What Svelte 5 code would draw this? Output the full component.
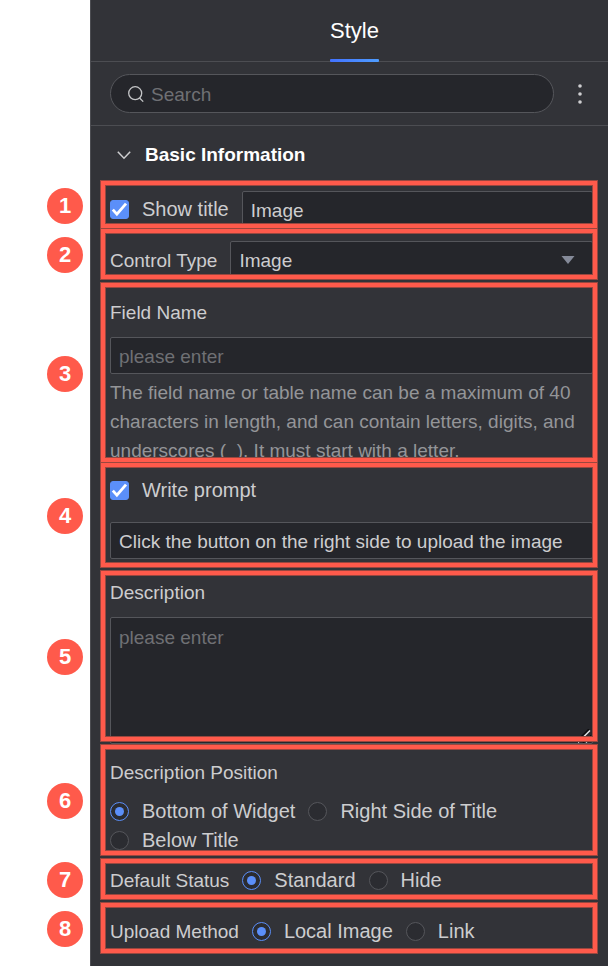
<script lang="ts">
	const positions = ['Bottom of Widget', 'Right Side of Title', 'Below Title'];
	const statuses = ['Standard', 'Hide'];
	const uploadMethods = ['Local Image', 'Link'];
	const controlTypes = ['Image', 'Text', 'Number'];

	let expanded = $state(true);
	let search = $state('');
	let showTitle = $state(true);
	let title = $state('Image');
	let controlType = $state('Image');
	let fieldName = $state('');
	let writePrompt = $state(true);
	let prompt = $state('Click the button on the right side to upload the image');
	let description = $state('');
	let position = $state('Bottom of Widget');
	let status = $state('Standard');
	let uploadMethod = $state('Local Image');
</script>

{#snippet badge(n: number)}
	<span class="badge">{n}</span>
{/snippet}

{#snippet tick()}
	<svg class="tick" viewBox="0 0 19 19" aria-hidden="true">
		<path d="M2.8 9.6 L6.9 14.2 L16 3.6" />
	</svg>
{/snippet}

<main class="panel">
	<header class="tabs">
		<button type="button" class="tab">Style</button>
	</header>

	<div class="toolbar">
		<label class="search">
			<svg class="search-icon" viewBox="0 0 16 16" aria-hidden="true">
				<circle cx="7.2" cy="7.2" r="6.5" />
				<path d="M11.6 12 L15.2 15.6" />
			</svg>
			<input type="text" placeholder="Search" aria-label="Search" bind:value={search} />
		</label>
		<button type="button" class="more" aria-label="More">
			<svg viewBox="0 0 20 20" aria-hidden="true">
				<circle cx="10" cy="2" r="1.8" />
				<circle cx="10" cy="10" r="1.8" />
				<circle cx="10" cy="18" r="1.8" />
			</svg>
		</button>
	</div>

	<button
		type="button"
		class="group-header"
		aria-expanded={expanded}
		onclick={() => (expanded = !expanded)}
	>
		<svg class="chevron" class:closed={!expanded} viewBox="0 0 14 14" aria-hidden="true">
			<path d="M0.8 3.8 L7 10.2 L13.2 3.8" />
		</svg>
		Basic Information
	</button>

	{#if expanded}
		<div class="settings">
			<section class="setting show-title joined">
				{@render badge(1)}
				<div class="row">
					<label class="option">
						<span class="check">
							<input type="checkbox" bind:checked={showTitle} />
							{@render tick()}
						</span>
						Show title
					</label>
					<input class="field" type="text" aria-label="Title" bind:value={title} />
				</div>
			</section>

			<section class="setting control-type">
				{@render badge(2)}
				<div class="row">
					<label for="control-type">Control Type</label>
					<div class="select">
						<select id="control-type" class="field" bind:value={controlType}>
							{#each controlTypes as type}
								<option>{type}</option>
							{/each}
						</select>
						<svg class="caret" viewBox="0 0 14 8" aria-hidden="true">
							<path d="M0.5 0 H13.5 L7 8 Z" />
						</svg>
					</div>
				</div>
			</section>

			<section class="setting field-name joined">
				{@render badge(3)}
				<label for="field-name">Field Name</label>
				<input
					id="field-name"
					class="field"
					type="text"
					placeholder="please enter"
					bind:value={fieldName}
				/>
				<p class="help">
					The field name or table name can be a maximum of 40 characters in length, and can contain
					letters, digits, and underscores (_). It must start with a letter.
				</p>
			</section>

			<section class="setting write-prompt">
				{@render badge(4)}
				<label class="option">
					<span class="check">
						<input type="checkbox" bind:checked={writePrompt} />
						{@render tick()}
					</span>
					Write prompt
				</label>
				<input class="field" type="text" aria-label="Prompt" bind:value={prompt} />
			</section>

			<section class="setting description">
				{@render badge(5)}
				<label for="description">Description</label>
				<div class="textarea">
					<textarea
						id="description"
						class="field"
						placeholder="please enter"
						bind:value={description}
					></textarea>
					<svg class="grip" viewBox="0 0 14 14" aria-hidden="true">
						<path class="grip-shadow" d="M11 0 L0 11 M11 8 L5 14" />
						<path d="M12 1.5 L0 13.5 M12 9.5 L8 13.5" />
					</svg>
				</div>
			</section>

			<section class="setting description-position">
				{@render badge(6)}
				<span id="position-label">Description Position</span>
				<div class="row wrap" role="radiogroup" aria-labelledby="position-label">
					{#each positions as value}
						<label class="option">
							<input type="radio" name="position" {value} bind:group={position} />
							{value}
						</label>
					{/each}
				</div>
			</section>

			<section class="setting default-status">
				{@render badge(7)}
				<div class="row" role="radiogroup" aria-labelledby="status-label">
					<span id="status-label">Default Status</span>
					{#each statuses as value}
						<label class="option">
							<input type="radio" name="status" {value} bind:group={status} />
							{value}
						</label>
					{/each}
				</div>
			</section>

			<section class="setting upload-method">
				{@render badge(8)}
				<div class="row" role="radiogroup" aria-labelledby="upload-label">
					<span id="upload-label">Upload Method</span>
					{#each uploadMethods as value}
						<label class="option">
							<input type="radio" name="upload" {value} bind:group={uploadMethod} />
							{value}
						</label>
					{/each}
				</div>
			</section>
		</div>
	{/if}
</main>

<style>
	:global(body) {
		background: #fff;
	}

	.panel {
		--bg: #323338;
		--field: #25262b;
		--line: #4c4d52;
		--text: #cdcdcf;
		--muted: #6f7074;
		--accent: #5b8ff9;
		--mark: #ff5a4b;

		box-sizing: border-box;
		min-height: 100vh;
		margin-left: 90px;
		padding-bottom: 9px;
		border-left: 1px solid var(--line);
		background: var(--bg);
		color: var(--text);
		font-family: 'Liberation Sans', Arial, sans-serif;
		font-size: 19px;
		line-height: 29px;
	}

	button,
	input,
	select,
	textarea {
		box-sizing: border-box;
		margin: 0;
		font: inherit;
		color: inherit;
	}

	button {
		padding: 0;
		border: 0;
		background: none;
		cursor: pointer;
	}

	svg {
		display: block;
		fill: none;
	}

	.tabs {
		display: flex;
		justify-content: center;
		padding-left: 10px;
		border-bottom: 1px solid var(--line);
	}

	.tab {
		position: relative;
		margin-bottom: -1px;
		font-size: 22px;
		line-height: 62px;
		color: #fff;
	}

	.tab::after {
		content: '';
		position: absolute;
		inset: auto 0 0;
		height: 3px;
		border-radius: 1px;
		background: linear-gradient(90deg, #4272ff, #4f9dff);
	}

	.toolbar {
		display: flex;
		align-items: center;
		gap: 16px;
		padding: 12px 18px 12px 19px;
		border-bottom: 1px solid var(--line);
	}

	.search {
		flex: 1;
		display: flex;
		align-items: center;
		gap: 7px;
		min-width: 0;
		padding: 3px 17px;
		border: 1px solid #55565b;
		border-radius: 20px;
		background: var(--field);
	}

	.search input {
		flex: 1;
		min-width: 0;
		padding: 2px 0 0;
		border: 0;
		outline: 0;
		background: none;
	}

	.search-icon {
		width: 16px;
		height: 16px;
		stroke: #c4c5c7;
		stroke-width: 1.3;
	}

	.more svg {
		width: 20px;
		height: 20px;
		fill: #cfcfd1;
	}

	.group-header {
		display: flex;
		align-items: center;
		gap: 14px;
		padding: 14px 0 12px 26px;
		font-weight: bold;
		color: #fff;
	}

	.chevron {
		width: 14px;
		height: 14px;
		stroke: #cfcfd1;
		stroke-width: 1.5;
	}

	.chevron.closed {
		transform: rotate(-90deg);
	}

	.settings {
		padding: 0 11px 0 10px;
	}

	.setting {
		position: relative;
		display: flex;
		flex-direction: column;
		gap: 10px;
		margin-bottom: 4px;
		padding: 0 4px 0 9px;
	}

	.setting.joined {
		margin-bottom: 1px;
	}

	/* callout frame, drawn over the controls */
	.setting::after {
		content: '';
		position: absolute;
		inset: 0;
		border: 4px solid var(--mark);
		box-shadow:
			0 0 0 1px #99473f,
			inset 0 0 0 1px #99473f;
		pointer-events: none;
	}

	.badge {
		position: absolute;
		top: 50%;
		left: -54px;
		width: 36px;
		height: 36px;
		margin-top: -17px;
		border-radius: 50%;
		background: var(--mark);
		color: #fff;
		font-size: 22px;
		font-weight: bold;
		line-height: 36px;
		text-align: center;
	}

	.show-title {
		padding-top: 10px;
	}

	.control-type {
		padding-top: 12px;
		padding-bottom: 1px;
	}

	.control-type label {
		padding-top: 2px;
	}

	.field-name {
		padding-top: 15px;
	}

	.write-prompt {
		gap: 17px;
		padding-top: 13px;
		padding-bottom: 8px;
	}

	.description {
		padding-top: 7px;
	}

	.description-position {
		padding-top: 13px;
	}

	.default-status {
		padding-top: 7px;
		padding-bottom: 4px;
	}

	.upload-method {
		padding-top: 14px;
		padding-bottom: 7px;
	}

	.row {
		display: flex;
		align-items: center;
		gap: 13px;
	}

	.row.wrap {
		flex-wrap: wrap;
		row-gap: 0;
	}

	.option {
		display: flex;
		align-items: center;
		gap: 13px;
		font-size: 20px;
		white-space: nowrap;
	}

	.row > label,
	.row > span {
		white-space: nowrap;
	}

	.field {
		width: 100%;
		height: 37px;
		padding: 2px 8px 0;
		border: 1px solid #55565b;
		border-radius: 2px;
		outline: 0;
		background: var(--field);
	}

	.row > .field,
	.select {
		flex: 1;
		min-width: 0;
	}

	.select {
		display: grid;
		align-items: center;
	}

	.select > * {
		grid-area: 1 / 1;
	}

	select.field {
		appearance: none;
	}

	.caret {
		justify-self: end;
		width: 14px;
		height: 8px;
		margin-right: 18px;
		fill: #858a99;
		pointer-events: none;
	}

	.textarea {
		position: relative;
		margin-bottom: -3px;
	}

	textarea.field {
		display: block;
		height: 127px;
		padding: 5px 8px;
		resize: vertical;
	}

	.grip {
		position: absolute;
		right: 1px;
		bottom: 1px;
		width: 14px;
		height: 14px;
		stroke: #e4e4e4;
		stroke-width: 1.4;
		pointer-events: none;
	}

	.grip-shadow {
		stroke: #0c0c0e;
	}

	::placeholder {
		color: var(--muted);
		opacity: 1;
	}

	.help {
		margin: -6px 0 -3px;
		color: #949598;
	}

	.check {
		display: grid;
	}

	.check > * {
		grid-area: 1 / 1;
	}

	input[type='checkbox'],
	input[type='radio'] {
		appearance: none;
		width: 19px;
		height: 19px;
		border: 1px solid #55565b;
		background: #2b2c31;
	}

	input[type='checkbox'] {
		border-radius: 3px;
	}

	input[type='checkbox']:checked {
		border-color: var(--accent);
		background: var(--accent);
	}

	.tick {
		width: 19px;
		height: 19px;
		stroke: #fff;
		stroke-width: 2.8;
		pointer-events: none;
		visibility: hidden;
	}

	input:checked + .tick {
		visibility: visible;
	}

	input[type='radio'] {
		display: grid;
		place-items: center;
		border-radius: 50%;
	}

	input[type='radio']:checked {
		border-color: var(--accent);
	}

	input[type='radio']:checked::before {
		content: '';
		width: 9px;
		height: 9px;
		border-radius: 50%;
		background: var(--accent);
	}
</style>
